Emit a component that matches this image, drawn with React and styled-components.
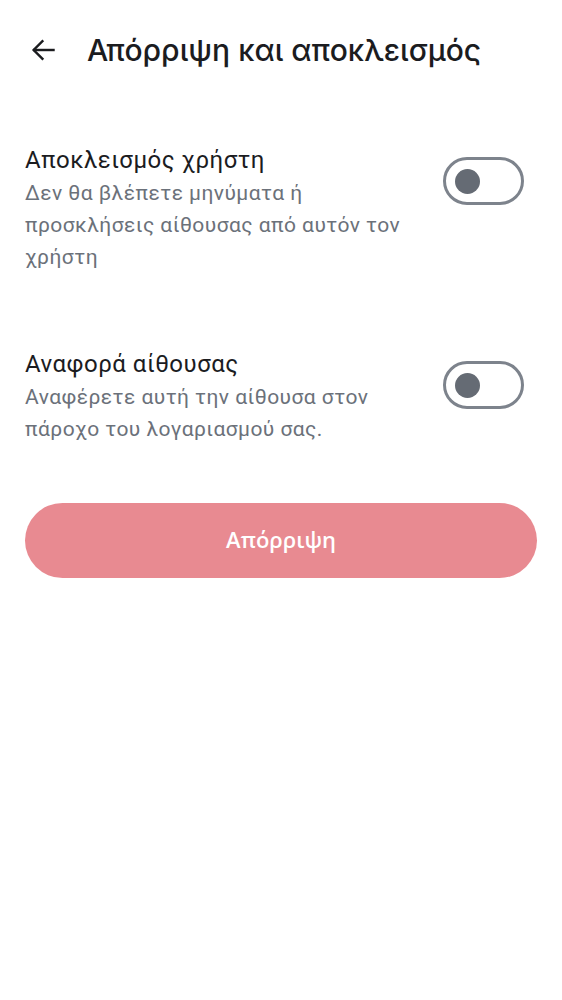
import React, { useState } from "react";
import styled, { createGlobalStyle } from "styled-components";

const GlobalStyle = createGlobalStyle`
    html, body {
        margin: 0;
        padding: 0;
        background: #ffffff;
    }
    body {
        font-family: Roboto, "Noto Sans", sans-serif;
    }
`;

const Page = styled.div`
    width: 562px;
    min-height: 1000px;
    background: #ffffff;
    display: flex;
    flex-direction: column;
`;

const TopBar = styled.div`
    display: flex;
    align-items: center;
    height: 100px;
    padding: 0 0 0 29px;
    gap: 30px;
    box-sizing: border-box;
`;

const BackButton = styled.button`
    display: flex;
    align-items: center;
    justify-content: center;
    width: 28px;
    height: 28px;
    padding: 0;
    border: none;
    background: transparent;
    color: #1b1c1f;
`;

const Title = styled.h1`
    margin: 0;
    font-family: Inter, Roboto, sans-serif;
    font-size: 30px;
    font-weight: 500;
    color: #1b1c1f;
`;

const Content = styled.div`
    display: flex;
    flex-direction: column;
    padding: 43px 25px 0 25px;
`;

const SettingRow = styled.div`
    display: flex;
    align-items: flex-start;
    justify-content: space-between;
    margin-bottom: ${({ $gap }) => $gap}px;
`;

const SettingText = styled.div`
    display: flex;
    flex-direction: column;
    width: 400px;
`;

const SettingTitle = styled.p`
    margin: 0;
    font-size: 24px;
    line-height: 34px;
    color: #1b1c1f;
    letter-spacing: 0.5px;
`;

const SettingDesc = styled.p`
    margin: 0;
    font-size: 21px;
    line-height: 32px;
    color: #6b717a;
    letter-spacing: 0.45px;
`;

const SwitchTrack = styled.button`
    display: flex;
    align-items: center;
    flex-shrink: 0;
    width: 81px;
    height: 48px;
    margin: 14px 13px 0 0;
    padding: 0 0 0 9px;
    box-sizing: border-box;
    border: 3px solid #7d838c;
    border-radius: 24px;
    background: #ffffff;
    cursor: pointer;
`;

const SwitchKnob = styled.span`
    display: block;
    width: 25px;
    height: 25px;
    border-radius: 50%;
    background: #656b74;
`;

const RejectButton = styled.button`
    display: flex;
    align-items: center;
    justify-content: center;
    height: 75px;
    width: 100%;
    padding: 0 0 3px 0;
    border: none;
    border-radius: 38px;
    background: #e88a91;
    color: #ffffff;
    font-family: "Open Sans", "Noto Sans", sans-serif;
    font-size: 22px;
    font-weight: 600;
    cursor: pointer;
`;

const Setting = ({ title, desc, gap }) => {
    const [on, setOn] = useState(false);
    return (
        <SettingRow $gap={gap}>
            <SettingText>
                <SettingTitle>{title}</SettingTitle>
                <SettingDesc>{desc}</SettingDesc>
            </SettingText>
            <SwitchTrack onClick={() => setOn(!on)} aria-pressed={on}>
                <SwitchKnob />
            </SwitchTrack>
        </SettingRow>
    );
};

const App = () => {
    return (
        <>
            <GlobalStyle />
            <Page>
                <TopBar>
                    <BackButton aria-label="back">
                        <svg width="28" height="28" viewBox="0 0 24 24" fill="none" stroke="currentColor" strokeWidth="2.1" strokeLinecap="square">
                            <path d="M21 12H4.5" />
                            <path d="M11.5 4.5L4 12l7.5 7.5" />
                        </svg>
                    </BackButton>
                    <Title>Απόρριψη και αποκλεισμός</Title>
                </TopBar>
                <Content>
                    <Setting
                        title="Αποκλεισμός χρήστη"
                        desc="Δεν θα βλέπετε μηνύματα ή προσκλήσεις αίθουσας από αυτόν τον χρήστη"
                        gap={74}
                    />
                    <Setting
                        title="Αναφορά αίθουσας"
                        desc="Αναφέρετε αυτή την αίθουσα στον πάροχο του λογαριασμού σας."
                        gap={58}
                    />
                    <RejectButton>Απόρριψη</RejectButton>
                </Content>
            </Page>
        </>
    );
};

export default App;
